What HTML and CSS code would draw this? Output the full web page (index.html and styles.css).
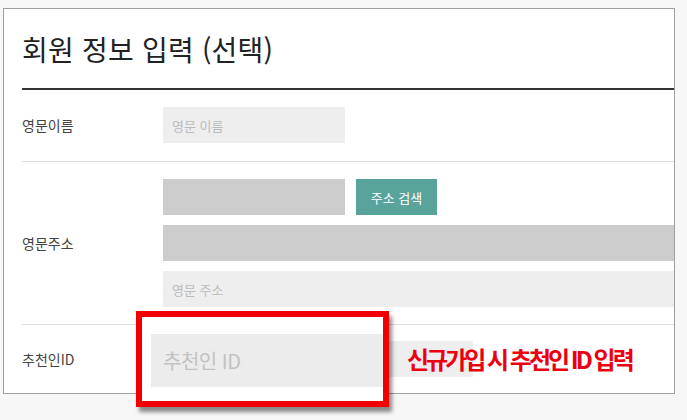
FILE: index.html
```html
<!DOCTYPE html>
<html lang="ko">
<head>
    <meta charset="UTF-8">
    <meta name="viewport" content="width=device-width, initial-scale=1.0">
    <title>회원 정보 입력 (선택)</title>
    <link rel="stylesheet" href="styles.css">
</head>
<body>
    <div class="panel">
        <h2 class="panel-title">회원 정보 입력 (선택)</h2>
        <div class="form-row">
            <label class="form-label">영문이름</label>
            <div class="form-field">
                <input class="field field-short field-light" placeholder="영문 이름">
            </div>
        </div>
        <div class="form-row">
            <label class="form-label">영문주소</label>
            <div class="form-field stack">
                <div class="inline">
                    <input class="field field-short field-dark">
                    <button class="btn-search">주소 검색</button>
                </div>
                <input class="field field-full field-dark">
                <input class="field field-full field-light" placeholder="영문 주소">
            </div>
        </div>
        <div class="form-row last">
            <label class="form-label">추천인ID</label>
            <div class="form-field">
                <input class="field field-mid field-light">
            </div>
        </div>

        <!-- callout over the referrer field -->
        <div class="callout-box">
            <div class="callout-field">추천인 ID</div>
        </div>
        <div class="callout-text">신규가입 시 추천인 ID 입력</div>
    </div>
</body>
</html>
```

FILE: styles.css
```css
html, body {
    min-height: 100vh;
}
body {
    margin: 0;
    background: #f7f7f7;
    font-family: "Noto Sans CJK KR", "Noto Sans", sans-serif;
    color: #333;
}
.panel {
    position: relative;
    width: 652px;
    margin: 8px 0 0 3px;
    padding-left: 18px;
    background: #fff;
    border: 1px solid #a0a0a0;
}
.panel-title {
    margin: 0;
    padding: 20px 0 19px;
    font-size: 28px;
    font-weight: 400;
    line-height: 40px;
    color: #222;
    letter-spacing: 0.2px;
    border-bottom: 2px solid #333;
}
.form-row {
    display: flex;
    align-items: center;
    padding: 17px 0;
    border-bottom: 1px solid #dedede;
}
.form-row:first-of-type {
    padding-bottom: 18px;
}
.form-row.last {
    padding: 16px 0;
    border-bottom: none;
}
.form-label {
    width: 141px;
    flex-shrink: 0;
    font-size: 14px;
    color: #444;
}
.form-field {
    flex: 1;
}
.stack {
    display: flex;
    flex-direction: column;
    gap: 10px;
}
.inline {
    display: flex;
    gap: 11px;
}
.field {
    display: block;
    box-sizing: border-box;
    height: 36px;
    border: none;
    outline: none;
    padding: 0 9px;
    font-family: inherit;
    font-size: 13px;
    color: #333;
}
.field::placeholder {
    color: #bbb;
}
.field-light {
    background: #eeeeee;
}
.field-dark {
    background: #cccccc;
}
.field-short {
    width: 182px;
}
.field-mid {
    width: 310px;
}
.field-full {
    width: 100%;
}
.btn-search {
    height: 36px;
    width: 81px;
    border: none;
    background: #58a49b;
    color: #fff;
    font-family: inherit;
    font-size: 13px;
    cursor: pointer;
}
.callout-box {
    position: absolute;
    z-index: 2;
    left: 132px;
    top: 302px;
    width: 253px;
    height: 96px;
    box-sizing: border-box;
    border: 6px solid #f00000;
    background: #fff;
    overflow: hidden;
    box-shadow: 3px 5px 4px rgba(0, 0, 0, 0.45);
}
.callout-field {
    margin: 17px 0 0 9px;
    height: 53px;
    line-height: 53px;
    padding-left: 12px;
    background: #ececec;
    font-size: 20px;
    color: #c2c2c2;
    letter-spacing: -0.5px;
}
.callout-text {
    position: absolute;
    z-index: 2;
    left: 403px;
    top: 335px;
    font-size: 24px;
    line-height: 30px;
    font-weight: 700;
    color: #ec0010;
    letter-spacing: -3px;
}
```
